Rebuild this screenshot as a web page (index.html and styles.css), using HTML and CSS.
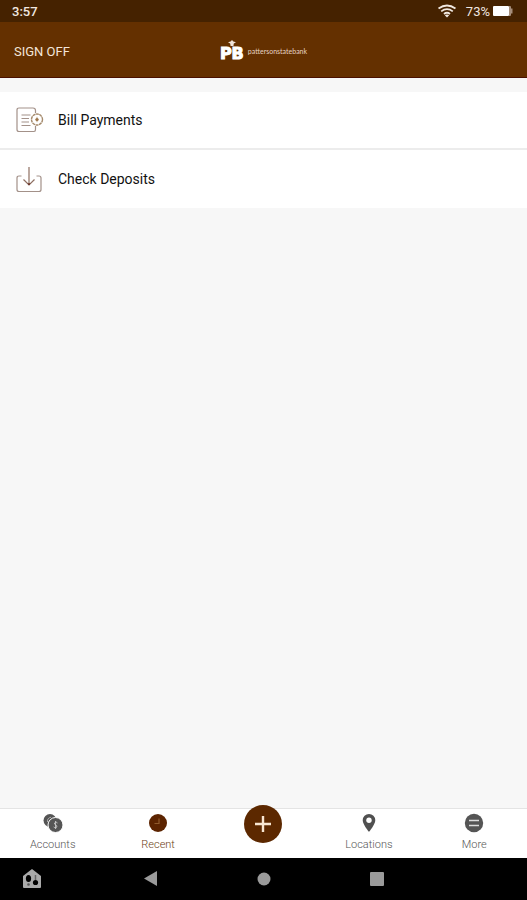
FILE: index.html
```html
<!DOCTYPE html>
<html lang="en">
<head>
    <meta charset="utf-8">
    <meta name="viewport" content="width=device-width, initial-scale=1">
    <title>Recent</title>
    <link rel="stylesheet" href="styles.css">
</head>
<body>
    <div class="status-bar">
        <span class="clock">3:57</span>
        <div class="status-right">
            <svg width="18" height="14" viewBox="0 0 18 14" fill="none" stroke="#f1e8e0" stroke-width="1.8">
                <path d="M.5 4.500Q9-1.500 17.500 4.500M3.200 7.400Q9 3 14.800 7.400M6 10Q9 7.500 12 10"/>
                <path d="M9 13.500L6.800 11.200Q9 9.600 11.200 11.200Z" fill="#f1e8e0" stroke="none"/>
            </svg>
            <span class="percent">73%</span>
            <svg width="20" height="10" viewBox="0 0 20 10">
                <rect width="16" height="10" rx="1" fill="#fff"/>
                <path d="M16 0h1q1 0 1 1v1.500h1.500v5H18V9q0 1-1 1h-1z" fill="#a58e7b"/>
            </svg>
        </div>
    </div>

    <header class="header">
        <button class="sign-off">SIGN OFF</button>
        <div class="logo">
            <div class="logo-mark">
                <svg width="8" height="6" viewBox="0 0 8 6" fill="#f0e4da">
                    <path d="M4 0l1.400 1.500L8 2.200 5.800 3.600 5.400 6H2.600L2.200 3.600 0 2.200l2.600-.700z"/>
                </svg>
                <span>PB</span>
            </div>
            <span class="logo-name">pattersonstatebank</span>
        </div>
    </header>

    <main class="content">
        <a class="row" href="#">
            <svg width="28" height="28" viewBox="0 0 28 28" fill="none" stroke="#a39189" stroke-width="1.200">
                <path d="M19.500 7V4.500Q19.500 2 17 2H3Q1 2 1 4v19.500q0 2 2 2h15q1.500 0 1.500-2V20"/>
                <path d="M5.500 9h9M5.500 12.500h7.500M5.500 16h7.500M5.500 19.500h9"/>
                <circle cx="21" cy="13.500" r="5.500" stroke="#a58a6c" stroke-width="1.400" stroke-dasharray="3 .450"/>
                <circle cx="21" cy="13.500" r="1.600" fill="#8a5a2c" stroke="none"/>
                <path d="M21 10.800v5.400" stroke="#b99a70" stroke-width=".8"/>
            </svg>
            <span>Bill Payments</span>
        </a>
        <a class="row" href="#">
            <svg width="28" height="28" viewBox="0 0 28 28" fill="none" stroke="#a39189" stroke-width="1.200">
                <path d="M5.500 11H3Q1 11 1 13v11.500q0 2 2 2h20q2 0 2-2V13q0-2-2-2h-2.500"/>
                <path d="M13 2v18M7.500 14.500L13 20l5.500-5.500" stroke="#8f7062"/>
                <path d="M11.500 18.500h3L13 20.200z" fill="#5a1b10" stroke="none"/>
            </svg>
            <span>Check Deposits</span>
        </a>
    </main>

    <nav class="tabs">
        <a class="tab" href="#">
            <svg width="20" height="20" viewBox="0 0 20 20">
                <circle cx="7" cy="7.500" r="6.500" fill="#555"/>
                <path d="M4.500 9Q4 5 8 4.200" fill="none" stroke="#aaa"/>
                <circle cx="12.500" cy="12" r="7.500" fill="#555" stroke="#fff"/>
                <path d="M14.500 10Q13.500 9 12.300 9.300 10.900 10 11.700 11.200L13.700 12.700Q14.500 14 13 14.700 11.700 15 10.700 14M12.600 8v8" fill="none" stroke="#ccc" stroke-width=".9"/>
            </svg>
            <span>Accounts</span>
        </a>
        <a class="tab active" href="#">
            <svg width="20" height="20" viewBox="0 0 20 20">
                <circle cx="10" cy="10" r="9" fill="#5c2400"/>
                <path d="M11 5.500V10.500H6.500" fill="none" stroke="#8f5a2c" stroke-width="1.200"/>
            </svg>
            <span>Recent</span>
        </a>
        <button class="add" aria-label="Add">
            <svg width="16" height="16" viewBox="0 0 16 16" fill="none" stroke="#f8e6d2" stroke-width="2.400">
                <path d="M8 0v16M0 8h16"/>
            </svg>
        </button>
        <a class="tab" href="#">
            <svg width="20" height="20" viewBox="0 0 20 20">
                <path d="M10 1a6.300 6.300 0 0 0-6.300 6.300C3.700 11.500 10 19 10 19s6.300-7.500 6.300-11.700A6.300 6.300 0 0 0 10 1z" fill="#505050"/>
                <circle cx="10" cy="7.300" r="2.700" fill="#fff"/>
            </svg>
            <span>Locations</span>
        </a>
        <a class="tab" href="#">
            <svg width="20" height="20" viewBox="0 0 20 20">
                <circle cx="10" cy="10" r="9.200" fill="#555"/>
                <path d="M5 7.500h10M5 12.500h10" stroke="#ddd" stroke-width="1.400"/>
            </svg>
            <span>More</span>
        </a>
    </nav>

    <div class="system-nav">
        <button class="home" aria-label="Home">
            <svg width="18" height="20" viewBox="0 0 18 20">
                <path d="M9 0l9 7v11q0 1-1 1H1q-1 0-1-1V7z" fill="#aaa"/>
                <ellipse cx="5.500" cy="9.500" rx="2.600" ry="3.500"/>
                <circle cx="12.500" cy="13.500" r="2.600"/>
                <circle cx="5.500" cy="15.500" r="1.300" fill="#555"/>
                <path d="M12.500 6v5" stroke="#666" stroke-width="1.500"/>
            </svg>
        </button>
        <button aria-label="Back">
            <svg width="14" height="16" viewBox="0 0 14 16" fill="#9a9a9a"><path d="M13 0v15L0 7.500z"/></svg>
        </button>
        <button aria-label="Launcher">
            <svg width="14" height="14" viewBox="0 0 14 14" fill="#9a9a9a"><circle cx="7" cy="7" r="6.500"/></svg>
        </button>
        <button aria-label="Overview">
            <svg width="14" height="14" viewBox="0 0 14 14" fill="#9a9a9a"><rect width="14" height="14" rx="1"/></svg>
        </button>
    </div>
</body>
</html>
```

FILE: styles.css
```css
* { box-sizing: border-box; }
body { margin: 0; min-height: 100vh; display: flex; flex-direction: column; background: #f7f7f7; font-family: Roboto, "Liberation Sans", sans-serif; color: #111; }
a { color: inherit; text-decoration: none; }
button { padding: 0; border: none; background: none; color: inherit; font-family: inherit; cursor: pointer; }
svg { display: block; flex: none; }

.status-bar { height: 22px; padding: 0 14px 0 12px; display: flex; align-items: center; justify-content: space-between; background: #452200; color: #f1e8e0; font-size: 13px; }
.clock { font-weight: 500; }
.status-right { display: flex; align-items: center; }
.percent { margin: 0 3px 0 10px; }

.header { height: 56px; padding: 3px 14px 0; display: grid; grid-template-columns: 1fr auto 1fr; align-items: center; background: #643000; border-bottom: 1px solid #4a1000; }
.sign-off { justify-self: start; color: #f3e6da; font-size: 13px; }
.logo { display: flex; align-items: center; gap: 4px; color: #fff; }
.logo-mark { display: flex; flex-direction: column; align-items: center; font-family: "DejaVu Sans", sans-serif; font-size: 16px; font-weight: 700; line-height: 16px; -webkit-text-stroke: 1px #fff; }
.logo-name { color: #e6d3c3; font-family: Lato, sans-serif; font-size: 7px; }

.content { flex: 1; padding-top: 14px; }
.row { height: 58px; padding: 0 16px; display: flex; align-items: center; gap: 14px; background: #fff; border-bottom: 1px solid #fff; font-size: 14px; }
.row:first-child { border-bottom: 2px solid #ececec; }

.tabs { height: 50px; display: grid; grid-template-columns: repeat(5, 1fr); background: #fff; border-top: 1px solid #e4e4e4; }
.tab { padding-top: 4px; display: flex; flex-direction: column; align-items: center; gap: 6px; color: #555; font-size: 11px; font-weight: 300; line-height: 12px; }
.active { color: #6b3c12; }
.add { width: 38px; height: 38px; margin-top: -4px; justify-self: center; display: flex; align-items: center; justify-content: center; border-radius: 50%; background: #5c2800; }

.system-nav { height: 42px; display: grid; grid-template-columns: 1fr 113px 113px 113px 1fr; align-items: center; justify-items: center; background: #000; }
.home { justify-self: start; margin-left: 23px; }
```
